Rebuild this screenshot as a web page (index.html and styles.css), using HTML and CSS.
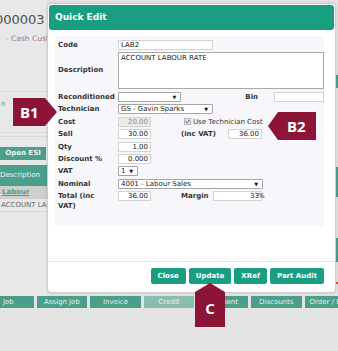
FILE: index.html
```html
<!DOCTYPE html>
<html lang="en">
<head>
    <meta charset="UTF-8">
    <meta name="viewport" content="width=device-width, initial-scale=1.0">
    <title>Quick Edit</title>
    <link rel="stylesheet" href="styles.css">
</head>
<body>
    <div class="page">
        <div class="main">
            <div class="side">
                <div class="job-no">000003</div>
                <div class="cust">- Cash Customer</div>
                <div class="tabs"><span class="tab-end">n</span></div>
                <div class="tabs-line"></div>
                <div class="side-btn">Open ESI</div>
                <div class="grid-head">Description</div>
                <div class="grid-group">Labour</div>
                <div class="grid-row">ACCOUNT LABOUR RATE</div>
            </div>
            <div class="under"></div>
            <div class="edge">
                <div class="edge-bit e1"></div>
                <div class="edge-bit e2"></div>
                <div class="edge-bit e3"></div>
                <div class="edge-bit e4"></div>
            </div>
        </div>
        <div class="action-bar">
            <span class="act">Job</span>
            <span class="act">Assign Job</span>
            <span class="act">Invoice</span>
            <span class="act off">Credit</span>
            <span class="act">Payment</span>
            <span class="act">Discounts</span>
            <span class="act">Order / Part</span>
        </div>
    </div>

    <div class="modal">
        <div class="modal-head">Quick Edit</div>
        <div class="modal-body">
            <div class="row">
                <div class="lbl">Code</div>
                <input class="inp w95" type="text" value="LAB2">
            </div>
            <div class="row desc">
                <div class="lbl">Description</div>
                <textarea class="txt">ACCOUNT LABOUR RATE</textarea>
            </div>
            <div class="row">
                <div class="lbl">Reconditioned</div>
                <span class="sel w66"><span></span><span class="arr">▼</span></span>
                <div class="lbl-bin">Bin</div>
                <input class="inp w50" type="text" value="">
            </div>
            <div class="row">
                <div class="lbl">Technician</div>
                <span class="sel w95"><span>GS - Gavin Sparks</span><span class="arr">▼</span></span>
            </div>
            <div class="row">
                <div class="lbl">Cost</div>
                <input class="inp num w33" type="text" value="20.00" disabled>
                <span class="chk">
                    <svg width="7" height="7" viewBox="0 0 7 7"><path d="M1 3.6 L2.8 5.4 L6 1.4" fill="none" stroke="#555" stroke-width="1.3"/></svg>
                </span>
                <span class="chk-text">Use Technician Cost</span>
            </div>
            <div class="row">
                <div class="lbl">Sell</div>
                <input class="inp num w33" type="text" value="30.00">
                <div class="lbl-sub">(inc VAT)</div>
                <input class="inp num w34" type="text" value="36.00">
            </div>
            <div class="row">
                <div class="lbl">Qty</div>
                <input class="inp num w33" type="text" value="1.00">
            </div>
            <div class="row">
                <div class="lbl">Discount %</div>
                <input class="inp num w33" type="text" value="0.000">
            </div>
            <div class="row">
                <div class="lbl">VAT</div>
                <span class="sel w20"><span>1</span><span class="arr">▼</span></span>
            </div>
            <div class="row">
                <div class="lbl">Nominal</div>
                <span class="sel w145"><span>4001 - Labour Sales</span><span class="arr">▼</span></span>
            </div>
            <div class="row total">
                <div class="lbl">Total (inc<br>VAT)</div>
                <input class="inp num w33" type="text" value="36.00">
                <div class="lbl-margin">Margin</div>
                <input class="inp num w49" type="text" value="33">
                <span class="pct">%</span>
            </div>
        </div>
        <div class="modal-foot">
            <button class="btn">Close</button>
            <button class="btn">Update</button>
            <button class="btn">XRef</button>
            <button class="btn">Part Audit</button>
        </div>
    </div>

    <div class="badge b1">B1</div>
    <div class="badge b2">B2</div>
    <div class="badge c">C</div>
</body>
</html>
```

FILE: styles.css
```css
body {
    margin: 0;
    width: 338px;
    height: 351px;
    overflow: hidden;
    background: #e4e4e4;
    font-family: 'DejaVu Sans', Verdana, sans-serif;
    font-size: 7px;
    color: #333;
    position: relative;
}
.page {
    width: 338px;
}
.main {
    display: flex;
    height: 296px;
}
.side {
    width: 47px;
    overflow: hidden;
    white-space: nowrap;
    background: #e8e8e8;
}
.job-no {
    margin: 12px 0 0 -5px;
    font-size: 13px;
    line-height: 16px;
    color: #4e4e4e;
}
.cust {
    margin: 6px 0 0 6px;
    font-size: 7.5px;
    line-height: 10px;
    color: #8a7d8c;
}
.tabs {
    margin-top: 47px;
    height: 40px;
    border-top: 1px solid #d6d6d6;
    border-bottom: 1px solid #d6d6d6;
}
.tab-end {
    display: block;
    padding: 8px 0 0 1px;
    color: #4a9e8a;
}
.tabs-line {
    margin-top: 3px;
    border-top: 1px solid #d6d6d6;
}
.side-btn {
    margin-top: 10px;
    width: 46px;
    height: 13px;
    line-height: 13px;
    background: #4aa08c;
    color: #f2f2f2;
    font-weight: bold;
    text-align: center;
}
.grid-head {
    margin-top: 5px;
    height: 21px;
    line-height: 21px;
    background: #4aa08c;
    color: #eef4f2;
}
.grid-group {
    height: 13px;
    line-height: 13px;
    background: #cfcfcf;
    color: #4a9e8a;
    font-weight: bold;
    padding-left: 2px;
    text-decoration: underline;
}
.grid-row {
    height: 12px;
    line-height: 12px;
    color: #666;
    padding-left: 1px;
    border-bottom: 1px solid #d4d4d4;
}
.under {
    flex: 1;
}
.edge {
    width: 2px;
    display: flex;
    flex-direction: column;
}
.edge-bit {
    background: #4aa08c;
}
.e1 { margin-top: 75px; height: 13px; }
.e2 { margin-top: 79px; height: 30px; }
.e3 { margin-top: 41px; height: 24px; }
.e4 { margin-top: 20px; height: 2px; background: #d0603a; }

.action-bar {
    display: flex;
    gap: 3px;
    margin-left: -17px;
    height: 12px;
    white-space: nowrap;
}
.act {
    flex: none;
    width: 50.6px;
    height: 12px;
    line-height: 12px;
    background: #4a9e8a;
    color: #e8f0ee;
    text-align: center;
    overflow: hidden;
}
.act.off {
    background: #8bbcb0;
}

.modal {
    position: absolute;
    top: 3px;
    left: 47px;
    width: 287px;
    height: 288px;
    background: #fff;
    border: 1px solid #cdcdcd;
    border-radius: 4px;
    box-shadow: 0 0 3px rgba(0, 0, 0, 0.15);
}
.modal-head {
    margin: 1px;
    height: 25px;
    line-height: 25px;
    padding-left: 6px;
    background: #1a9e82;
    border-radius: 3px;
    color: #fff;
    font-weight: bold;
    font-size: 9px;
}
.modal-body {
    margin: 6px 0 0 7px;
    width: 269px;
    height: 190px;
    box-sizing: border-box;
    padding: 3px 0 0 3px;
    background: #f7f7fb;
}
.row {
    display: flex;
    align-items: center;
    height: 12.4px;
    white-space: nowrap;
}
.row:first-child {
    height: 12px;
}
.row.desc {
    height: 38px;
    margin-bottom: 1.8px;
}
.row.total {
    align-items: flex-start;
    height: 22px;
    padding-top: 1px;
}
.lbl {
    width: 60px;
    flex: none;
    font-weight: bold;
    color: #333;
}
.total .lbl {
    line-height: 10px;
}
.inp {
    box-sizing: border-box;
    height: 10px;
    margin: 0;
    padding: 0 2px;
    border: 1px solid #d3d3d3;
    background: #fff;
    font-family: inherit;
    font-size: 7px;
    color: #222;
    outline: none;
}
.inp.num {
    text-align: right;
}
.inp:disabled {
    background: #ebebe6;
    color: #8a8a8a;
}
.w20 { width: 20px; }
.w33 { width: 33px; }
.w34 { width: 34px; }
.w49 { width: 49px; }
.w50 { width: 50px; }
.w66 { width: 66px; }
.w95 { width: 95px; }
.w145 { width: 145px; }
.txt {
    box-sizing: border-box;
    width: 209px;
    height: 37px;
    margin: 0;
    padding: 1px 2px;
    border: 1px solid #a9a9a9;
    resize: none;
    font-family: inherit;
    font-size: 7px;
    color: #222;
    background: #fff;
}
.sel {
    box-sizing: border-box;
    display: flex;
    justify-content: space-between;
    align-items: center;
    height: 10px;
    padding: 0 4px 0 2px;
    border: 1px solid #a5a5a5;
    border-radius: 1px;
    background: #fff;
    color: #222;
}
.sel .arr {
    font-size: 5px;
    color: #111;
}
.lbl-bin {
    margin-left: 64px;
    width: 30px;
    font-weight: bold;
}
.chk {
    box-sizing: border-box;
    display: flex;
    align-items: center;
    justify-content: center;
    width: 7px;
    height: 7px;
    margin-left: 33px;
    border: 1px solid #b5b5b5;
    background: #e2e2e2;
}
.chk svg {
    display: block;
}
.chk-text {
    margin-left: 2px;
    color: #333;
}
.lbl-sub {
    width: 47px;
    margin-left: 30px;
    font-weight: bold;
}
.lbl-margin {
    width: 32px;
    margin-left: 30px;
    font-weight: bold;
    line-height: 10px;
}
.pct {
    margin-left: -4px;
    line-height: 10px;
    color: #222;
}
.modal-foot {
    margin-top: 35px;
    border-top: 1px solid #e6e6e6;
    padding: 6px 11px 0 0;
    display: flex;
    justify-content: flex-end;
    gap: 3px;
}
.btn {
    height: 16px;
    padding: 0 7px;
    border: none;
    border-radius: 2px;
    background: #1a9e82;
    color: #fff;
    font-family: inherit;
    font-size: 7px;
    font-weight: bold;
    cursor: pointer;
}

.badge {
    position: absolute;
    display: flex;
    align-items: center;
    box-sizing: border-box;
    background: #8c1537;
    color: #fff;
    font-family: 'Open Sans', sans-serif;
    font-weight: bold;
    font-size: 15px;
}
.b1 {
    left: 13px;
    top: 98px;
    width: 44px;
    height: 28px;
    padding-left: 7px;
    clip-path: polygon(0 0, 32px 0, 44px 14px, 32px 28px, 0 28px);
}
.b2 {
    left: 268px;
    top: 112px;
    width: 48px;
    height: 28px;
    padding-left: 19px;
    clip-path: polygon(10px 0, 48px 0, 48px 28px, 10px 28px, 0 14px);
}
.c {
    left: 195px;
    top: 283px;
    width: 30px;
    height: 44px;
    justify-content: center;
    padding-top: 6px;
    clip-path: polygon(15px 0, 30px 9px, 30px 44px, 0 44px, 0 9px);
}
```
